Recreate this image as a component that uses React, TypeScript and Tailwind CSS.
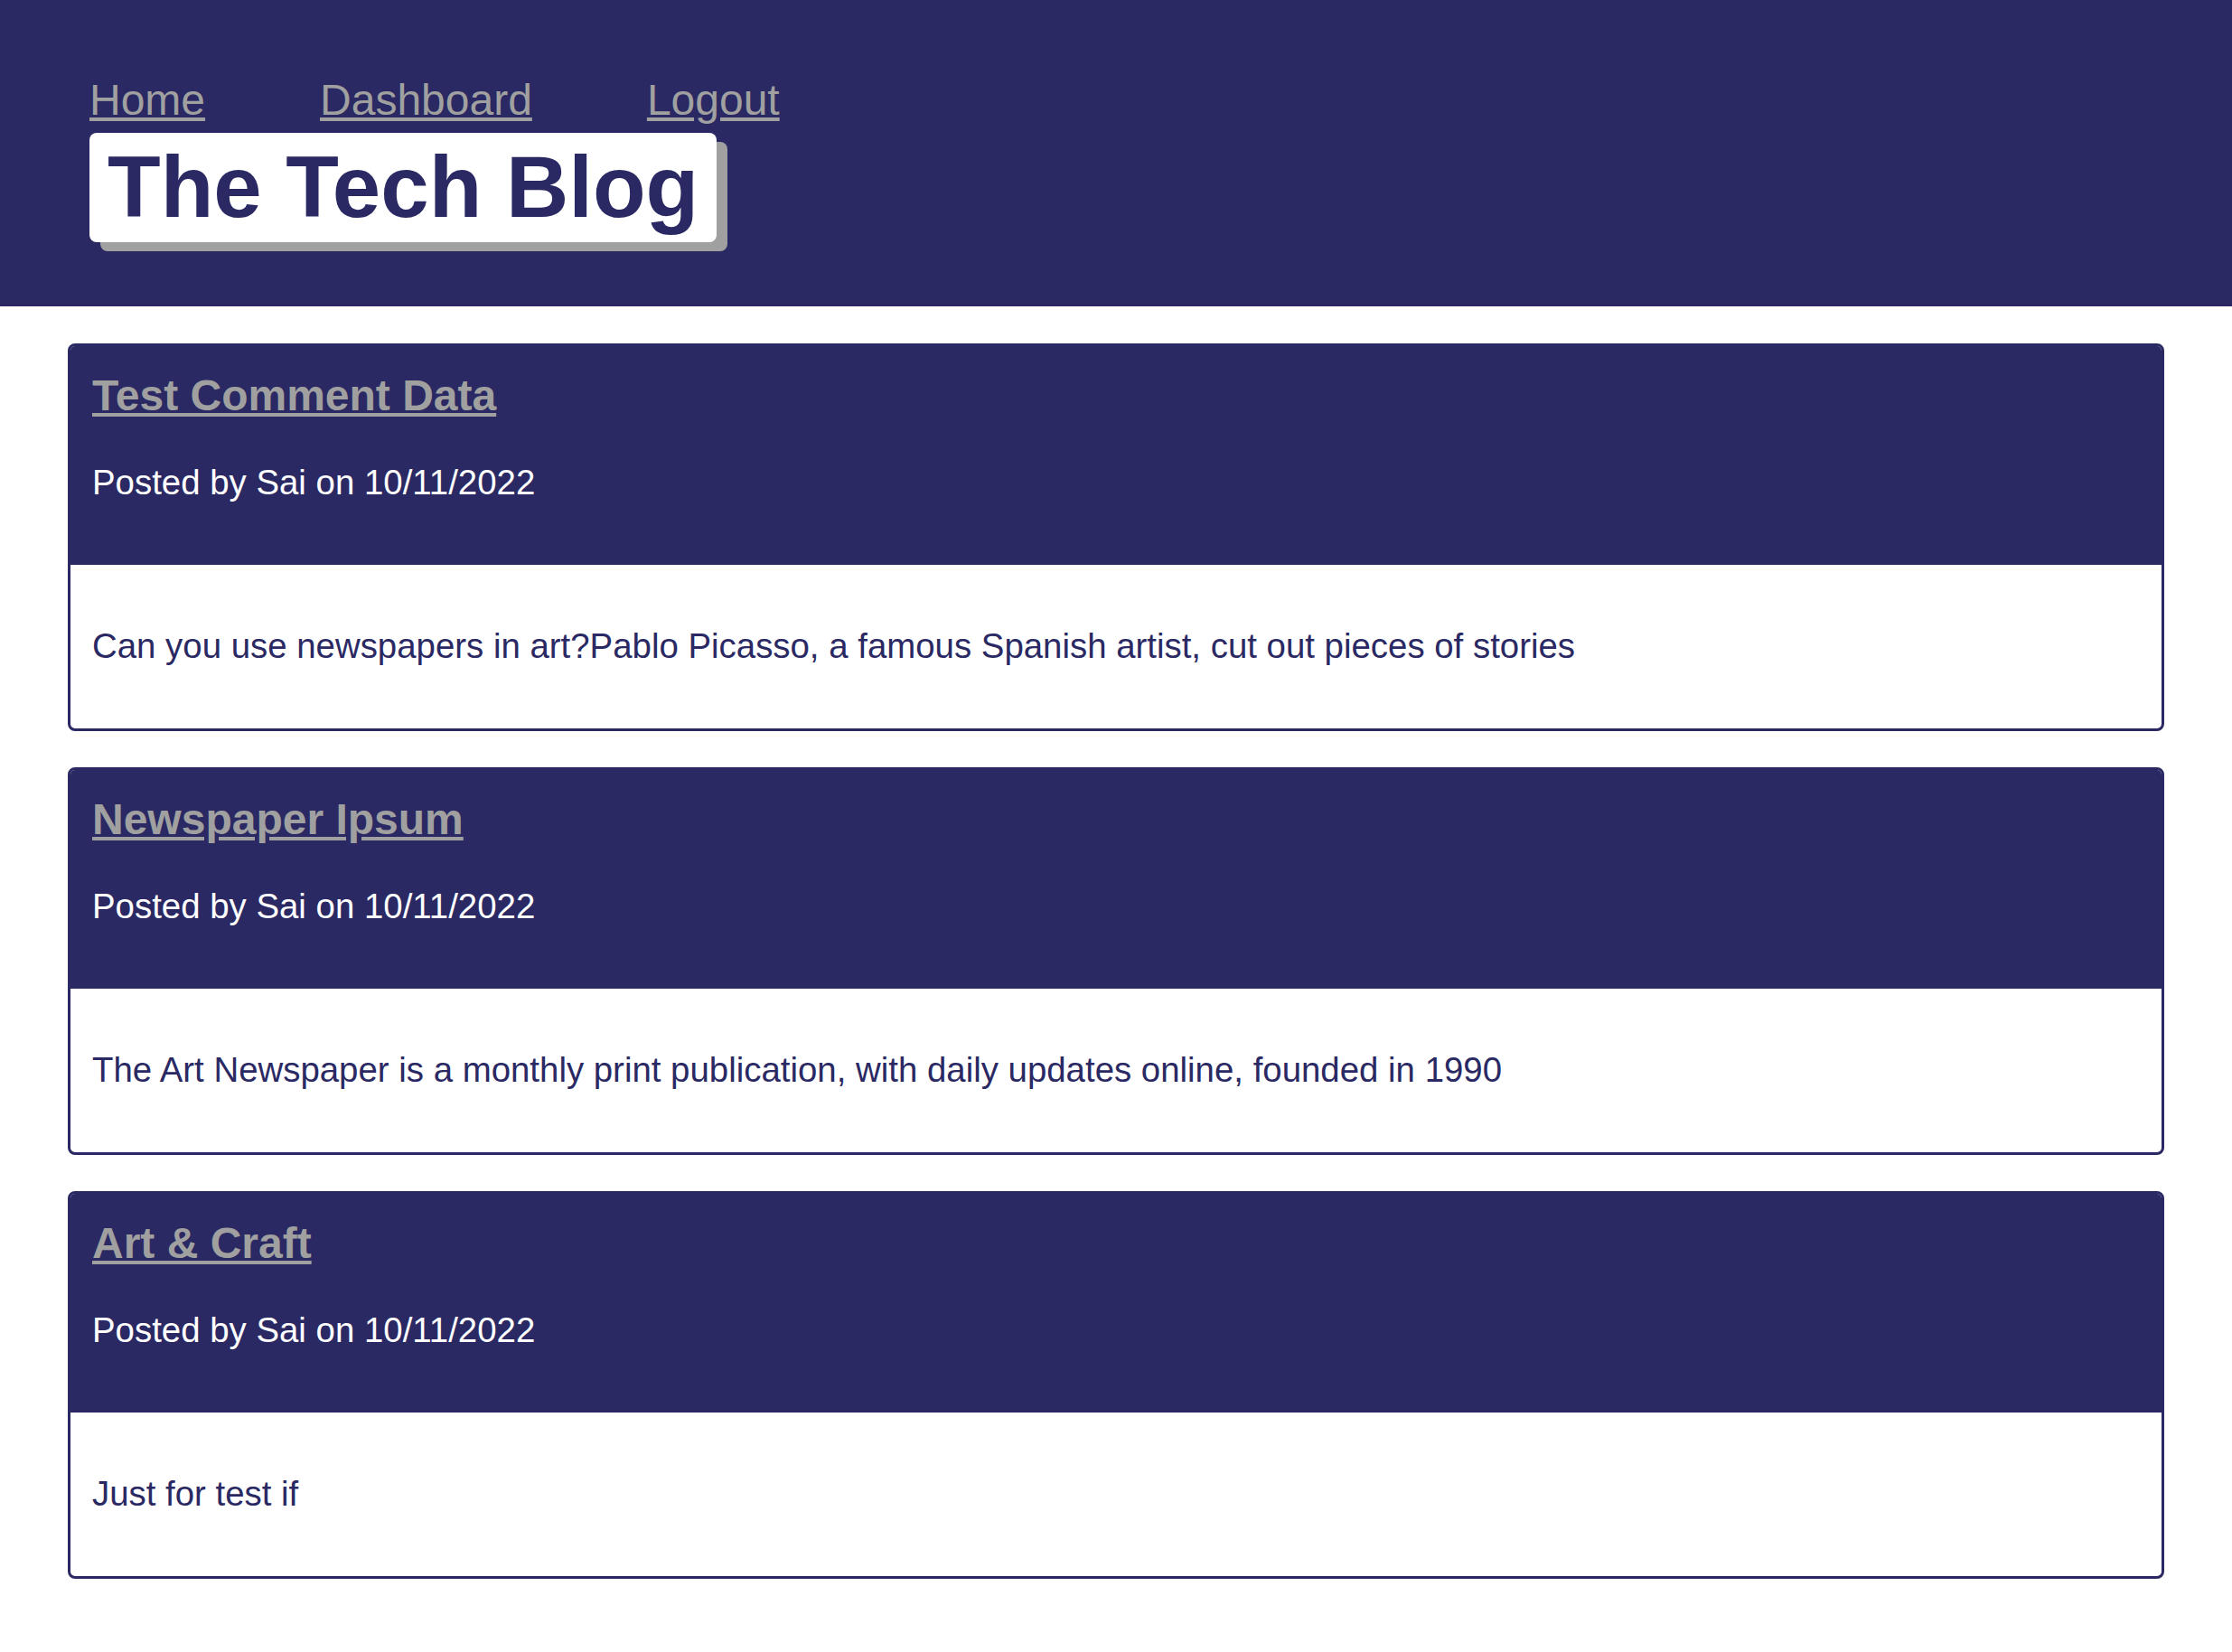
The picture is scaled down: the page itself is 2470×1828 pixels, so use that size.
const posts = [
  {
    title: 'Test Comment Data',
    author: 'Sai',
    date: '10/11/2022',
    body: 'Can you use newspapers in art?Pablo Picasso, a famous Spanish artist, cut out pieces of stories',
  },
  {
    title: 'Newspaper Ipsum',
    author: 'Sai',
    date: '10/11/2022',
    body: 'The Art Newspaper is a monthly print publication, with daily updates online, founded in 1990',
  },
  {
    title: 'Art & Craft',
    author: 'Sai',
    date: '10/11/2022',
    body: 'Just for test if',
  },
]

function Header() {
  return (
    <header className="bg-[#2a2963] h-[339px] pl-[99px] pt-[83px]">
      <nav className="flex gap-[127px] text-[48px] leading-[1.15] text-[#a0a0a0]">
        <a href="#" className="underline">Home</a>
        <a href="#" className="underline">Dashboard</a>
        <a href="#" className="underline">Logout</a>
      </nav>
      <div className="mt-[9px] inline-block bg-white rounded-lg px-[20px] py-[5px] shadow-[12px_10px_0_#a0a0a0]">
        <h1 className="text-8xl font-bold leading-[1.15] text-[#2a2963]">The Tech Blog</h1>
      </div>
    </header>
  )
}

function PostCard({ post }: { post: (typeof posts)[number] }) {
  return (
    <article className="border-[3px] border-[#2a2963] rounded-lg overflow-hidden h-[429px] flex flex-col">
      <div className="bg-[#2a2963] h-[242px] px-[24px] pt-[27px]">
        <a href="#" className="text-[48px] font-bold leading-[1.15] text-[#a0a0a0] underline">
          {post.title}
        </a>
        <p className="mt-[47px] text-[38.4px] leading-[1.15] text-white">
          Posted by {post.author} on {post.date}
        </p>
      </div>
      <div className="flex-1 flex items-center px-[24px]">
        <p className="text-[38.4px] leading-[1.15] text-[#2a2963]">{post.body}</p>
      </div>
    </article>
  )
}

export default function App() {
  return (
    <div className="min-h-screen bg-white font-['Liberation_Sans',Arial,sans-serif]">
      <Header />
      <main className="px-[75px] pt-[41px] pb-[82px] flex flex-col gap-[40px]">
        {posts.map((p) => (
          <PostCard key={p.title} post={p} />
        ))}
      </main>
    </div>
  )
}
